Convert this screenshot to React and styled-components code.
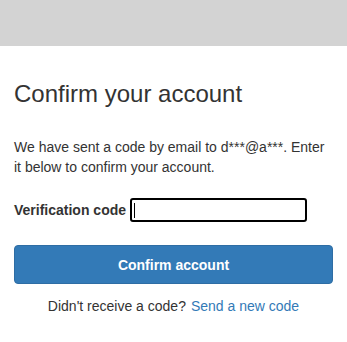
import React from "react";
import styled, { createGlobalStyle } from "styled-components";

const GlobalStyle = createGlobalStyle`
  html, body {
    margin: 0;
    padding: 0;
    background: #ffffff;
  }
  body {
    font-family: "Liberation Sans", Arial, sans-serif;
    font-size: 14px;
    line-height: 20px;
    color: #333333;
  }
`;

const TopBar = styled.header`
  height: 46px;
  background-color: #d3d3d3;
`;

const Main = styled.main`
  padding: 0 14px;
`;

const Title = styled.h1`
  margin: 35px 0 0;
  font-size: 24px;
  line-height: 26.4px;
  font-weight: 400;
  color: #333333;
`;

const Message = styled.p`
  margin: 30px 0 0;
`;

const Field = styled.div`
  display: flex;
  align-items: center;
  gap: 4px;
  height: 24px;
  margin-top: 21px;

  label {
    font-weight: 700;
    white-space: nowrap;
  }

  input {
    box-sizing: border-box;
    width: 177px;
    height: 24px;
    padding: 0 3px;
    border: 2px solid #000000;
    border-radius: 3px;
    outline: none;
    font-family: inherit;
    font-size: 14px;
    caret-color: transparent;
    /* the focused text caret seen in the picture */
    background: #ffffff linear-gradient(#000000, #000000) no-repeat 2px center / 1px 15px;
  }
`;

const Button = styled.button`
  display: block;
  box-sizing: border-box;
  width: 100%;
  height: 39px;
  margin-top: 23px;
  border: 1px solid #2e6da4;
  border-radius: 4px;
  background-color: #337ab7;
  color: #ffffff;
  font-family: inherit;
  font-size: 14px;
  font-weight: 700;
  cursor: pointer;
`;

const Footer = styled.p`
  margin: 12px 0 0;
  text-align: center;

  a {
    margin-left: 5px;
    color: #337ab7;
    text-decoration: none;
  }
`;

export default function App() {
  return (
    <>
      <GlobalStyle />
      <TopBar />
      <Main>
        <Title>Confirm your account</Title>
        <Message>
          We have sent a code by email to d***@a***. Enter it below to confirm
          your account.
        </Message>
        <Field>
          <label htmlFor="code">Verification code</label>
          <input id="code" type="text" />
        </Field>
        <Button type="button">Confirm account</Button>
        <Footer>
          Didn't receive a code?
          <a href="#resend">Send a new code</a>
        </Footer>
      </Main>
    </>
  );
}
